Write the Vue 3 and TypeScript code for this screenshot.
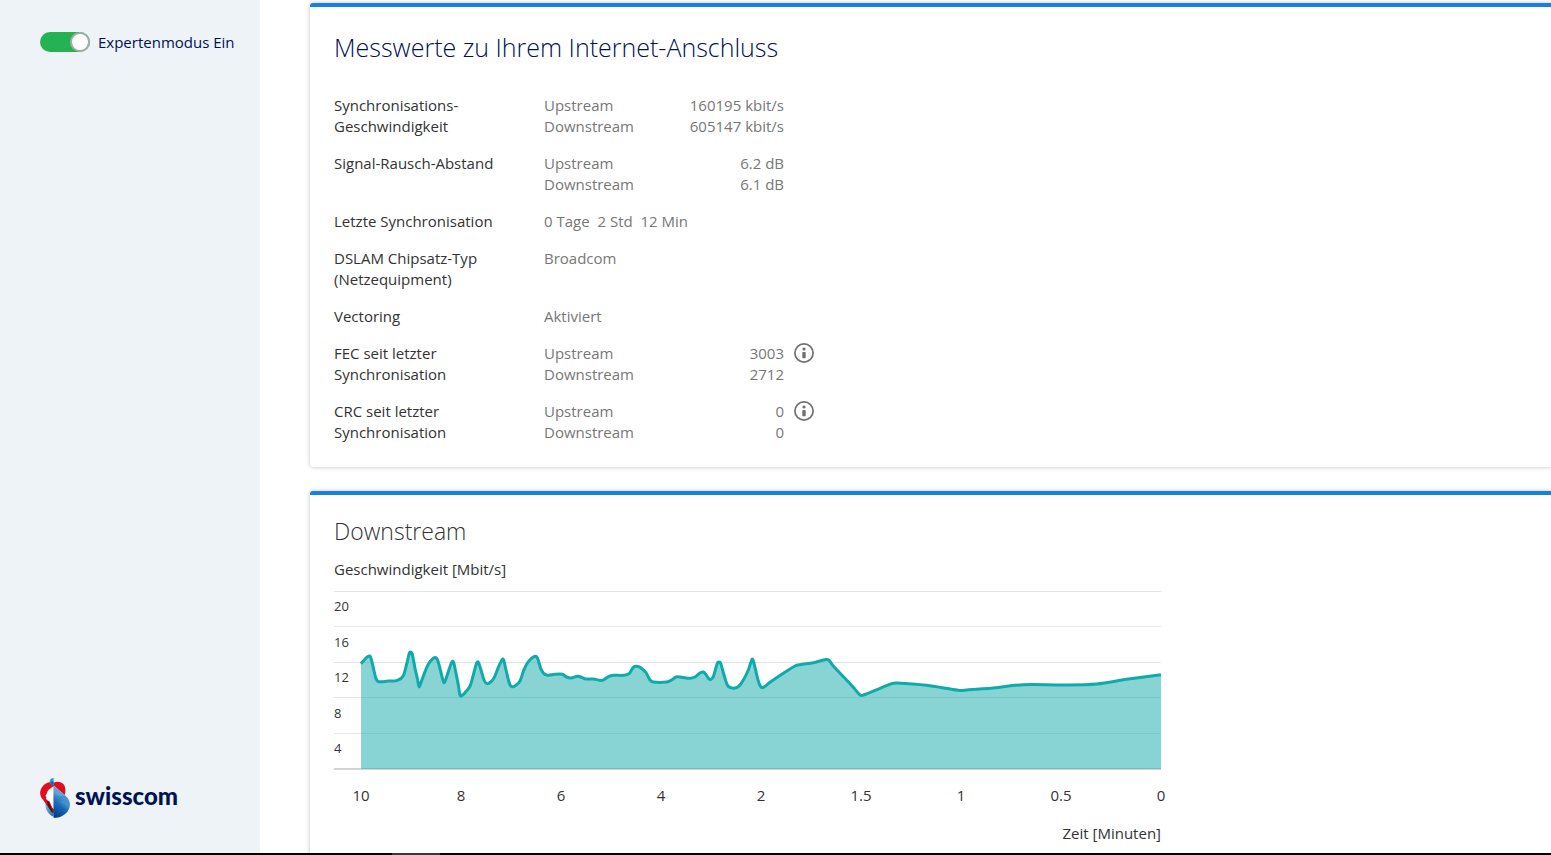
<script setup lang="ts">
import { ref } from 'vue'

interface Measurement {
  label: string[]
  names: string[]
  values: string[]
  info?: boolean
}

const expert = ref(true)

const measurements: Measurement[] = [
  { label: ['Synchronisations-', 'Geschwindigkeit'], names: ['Upstream', 'Downstream'], values: ['160195 kbit/s', '605147 kbit/s'] },
  { label: ['Signal-Rausch-Abstand'], names: ['Upstream', 'Downstream'], values: ['6.2 dB', '6.1 dB'] },
  { label: ['Letzte Synchronisation'], names: ['0 Tage\u00a0 2 Std\u00a0 12 Min'], values: [] },
  { label: ['DSLAM Chipsatz-Typ', '(Netzequipment)'], names: ['Broadcom'], values: [] },
  { label: ['Vectoring'], names: ['Aktiviert'], values: [] },
  { label: ['FEC seit letzter', 'Synchronisation'], names: ['Upstream', 'Downstream'], values: ['3003', '2712'], info: true },
  { label: ['CRC seit letzter', 'Synchronisation'], names: ['Upstream', 'Downstream'], values: ['0', '0'], info: true },
]

const yTicks = [20, 16, 12, 8, 4].map((value, i) => ({ value, line: [11, 46, 82, 117, 153][i], text: [31, 67, 102, 138, 173][i] }))
const xTicks = ['10', '8', '6', '4', '2', '1.5', '1', '0.5', '0'].map((value, i) => ({ value, x: 27 + i * 100 }))

// Samples as [time, depth below the chart top], three steps per chart unit
const samples: [number, number][] = [
  [0, 251], [17, 232], [26, 228], [31, 238], [38, 268], [45, 296], [53, 305], [82, 303], [109, 301], [127, 287],
  [137, 252], [145, 220], [149, 216], [154, 223], [162, 265], [170, 300], [174, 320], [179, 310], [189, 283],
  [202, 253], [217, 235], [227, 235], [233, 250], [243, 290], [249, 308], [255, 296], [267, 260], [273, 245],
  [278, 247], [283, 270], [292, 315], [297, 345], [304, 346], [317, 332], [328, 316], [337, 285], [347, 249],
  [352, 247], [359, 267], [369, 300], [378, 311], [389, 306], [400, 292], [412, 262], [424, 238], [428, 240],
  [435, 270], [445, 310], [452, 320], [463, 317], [477, 303], [489, 269], [502, 245], [519, 230], [529, 233],
  [539, 265], [549, 281], [560, 286], [582, 283], [604, 283], [617, 291], [630, 294], [650, 289], [662, 292],
  [674, 297], [697, 297], [717, 301], [727, 300], [742, 290], [757, 286], [787, 286], [804, 281], [817, 262],
  [827, 259], [839, 263], [855, 278], [867, 300], [877, 306], [917, 306], [932, 300], [945, 291], [962, 292],
  [987, 295], [1002, 291], [1017, 279], [1027, 276], [1035, 284], [1043, 296], [1050, 298], [1057, 290],
  [1069, 250], [1074, 246], [1079, 250], [1089, 285], [1099, 315], [1109, 323], [1122, 324], [1133, 319],
  [1147, 300], [1162, 270], [1172, 240], [1175, 238], [1179, 250], [1191, 300], [1199, 320], [1207, 322],
  [1227, 307], [1267, 280], [1302, 258], [1317, 254], [1357, 248], [1392, 239], [1403, 240], [1417, 258],
  [1479, 324], [1497, 345], [1507, 345], [1557, 325], [1592, 311], [1607, 309], [1697, 316], [1792, 331],
  [1817, 330], [1897, 324], [1987, 314], [2107, 315], [2207, 312], [2297, 298], [2400, 284],
]

// Cubic curve through all points, each tangent taken from the two neighbours
function curve(points: number[][]): string {
  const last = points.length - 1
  const tangents = points.map((_, i) => {
    const a = points[Math.max(i - 1, 0)]
    const b = points[Math.min(i + 1, last)]
    return (b[1] - a[1]) / (b[0] - a[0])
  })
  let d = `M${points[0][0]} ${points[0][1]}`
  for (let i = 0; i < last; i++) {
    const [x0, y0] = points[i]
    const [x1, y1] = points[i + 1]
    const h = (x1 - x0) / 3
    d += `C${x0 + h} ${y0 + tangents[i] * h} ${x1 - h} ${y1 - tangents[i + 1] * h} ${x1} ${y1}`
  }
  return d
}

const linePath = curve(samples.map(([x, y]) => [27 + x / 3, y / 3]))
const areaPath = `${linePath}V189H27Z`
</script>

<template>
  <div class="page">
    <div class="view">
      <aside class="sidebar">
        <label class="switch">
          <input v-model="expert" type="checkbox" role="switch" />
          <span>Expertenmodus {{ expert ? 'Ein' : 'Aus' }}</span>
        </label>
        <div class="brand">
          <svg class="brand-mark" viewBox="0 0 90 120" aria-hidden="true">
            <defs>
              <linearGradient id="wing" x1="0.7" y1="0" x2="0.3" y2="1">
                <stop offset="0" stop-color="#2f86cc" />
                <stop offset="0.35" stop-color="#5fa9df" />
                <stop offset="0.65" stop-color="#1768b4" />
                <stop offset="1" stop-color="#0a3f88" />
              </linearGradient>
              <linearGradient id="cheek" x1="0" y1="0" x2="1" y2="1">
                <stop offset="0" stop-color="#86c5ea" />
                <stop offset="1" stop-color="#1c66b0" />
              </linearGradient>
              <linearGradient id="heart" x1="0" y1="0" x2="0.4" y2="1">
                <stop offset="0" stop-color="#e5101f" />
                <stop offset="0.6" stop-color="#dd0c20" />
                <stop offset="1" stop-color="#8d0714" />
              </linearGradient>
            </defs>
            <path d="M17 72C13 88 22 110 41 116L41 92Z" fill="url(#cheek)" />
            <path d="M40 16C31 10 20 11 9 24C-2 36-3 53 9 65L30 95L41 105V14C51 9 68 11 74 24C77 33 77 42 74 51L40 22Z" fill="url(#heart)" />
            <path d="M41 25C33 30 25 35 22 41C22 46 16 51 17 55C19 57 20 59 18 62C20 67 27 67 29 71C32 78 35 88 41 94Z" fill="#fff" />
            <path d="M20 68C27 69 29 75 31 83C33 91 37 99 41 106C31 100 24 86 20 68Z" fill="#5b0712" />
            <path d="M41 24L76 53C87 62 92 76 89 87C85 106 64 120 41 120Z" fill="url(#wing)" />
            <path d="M41 53L76 53C87 62 91 73 89 83C75 67 59 63 41 88Z" fill="#1b6fbb" opacity="0.35" />
            <path d="M29 13C28 4 33 0 41 0V25C35 22 31 18 29 13Z" fill="#3b9ad4" />
            <path d="M31 12C34 9 38 9 41 12V25C36 22 33 17 31 12Z" fill="#1467b1" />
          </svg>
          <span class="brand-name">swisscom</span>
        </div>
      </aside>

      <main class="content">
        <section class="card">
          <h1>Messwerte zu Ihrem Internet-Anschluss</h1>
          <table class="values">
            <tbody>
              <tr v-for="row in measurements" :key="row.label[0]">
                <th scope="row"><div v-for="line in row.label" :key="line">{{ line }}</div></th>
                <td class="name" :colspan="row.values.length ? 1 : 2">
                  <div v-for="line in row.names" :key="line">{{ line }}</div>
                </td>
                <td v-if="row.values.length" class="number">
                  <div v-for="(line, i) in row.values" :key="i">{{ line }}</div>
                </td>
                <td class="help">
                  <button v-if="row.info" type="button" :aria-label="'Information zu ' + row.label.join(' ')">
                    <svg viewBox="0 0 20 20" aria-hidden="true">
                      <circle cx="10" cy="10" r="9.1" fill="none" stroke="#707070" stroke-width="1.7" />
                      <circle cx="10" cy="6" r="1.6" fill="#707070" />
                      <rect x="8.3" y="9" width="3.4" height="6.3" rx="0.7" fill="#707070" />
                    </svg>
                  </button>
                </td>
              </tr>
            </tbody>
          </table>
        </section>

        <section class="card">
          <h2>Downstream</h2>
          <p class="axis-title">Geschwindigkeit [Mbit/s]</p>
          <div class="chart">
            <svg class="plot" viewBox="0 0 827 231" role="img" aria-label="Downstream-Geschwindigkeit">
              <g class="grid">
                <rect v-for="t in yTicks" :key="t.value" x="0" :y="t.line" width="827" height="1" />
              </g>
              <rect class="base" x="0" y="188" width="827" height="2" />
              <path class="area" :d="areaPath" />
              <path class="line" :d="linePath" />
              <text v-for="t in yTicks" :key="t.value" class="y-label" x="0" :y="t.text">{{ t.value }}</text>
              <text v-for="t in xTicks" :key="t.value" class="x-label" :x="t.x" y="221">{{ t.value }}</text>
            </svg>
            <p class="time">Zeit [Minuten]</p>
          </div>
        </section>
      </main>
    </div>
    <div class="taskbar"><span></span></div>
  </div>
</template>

<style>
body {
  margin: 0;
  background: #fff;
}
</style>

<style scoped>
.page {
  display: flex;
  flex-direction: column;
  height: 100vh;
  overflow: hidden;
  font-family: "Open Sans", "Noto Sans", sans-serif;
  font-size: 15px;
  line-height: 21px;
  color: #333;
}
.view {
  display: flex;
  flex: 1;
  min-height: 0;
}
.sidebar {
  box-sizing: border-box;
  display: flex;
  flex-direction: column;
  justify-content: space-between;
  flex: 0 0 260px;
  padding: 32px 0 35px 40px;
  background: #edf3f6;
}
.switch {
  display: flex;
  align-items: center;
  gap: 8px;
  height: 20px;
  color: #001155;
  white-space: nowrap;
}
.switch input {
  appearance: none;
  display: flex;
  width: 50px;
  height: 20px;
  margin: 0;
  border-radius: 10px;
  background: #a8a8a8;
}
.switch input::before {
  content: "";
  box-sizing: border-box;
  width: 20px;
  height: 20px;
  border: 2px solid #aaa;
  border-radius: 50%;
  background: #fff;
}
.switch input:checked {
  justify-content: flex-end;
  background: #25b252;
}
.brand {
  display: flex;
  align-items: center;
  gap: 5px;
}
.brand-mark {
  width: 30px;
  height: 40px;
}
.brand-name {
  padding-bottom: 4px;
  font-family: Lato, "Open Sans", sans-serif;
  font-size: 24px;
  font-weight: 900;
  line-height: 28px;
  color: #001155;
}
.content {
  display: flex;
  flex-direction: column;
  flex: 1;
  gap: 24px;
  min-width: 0;
  padding: 3px 0 0 50px;
  overflow: hidden;
}
.card {
  flex: none;
  padding: 24px;
  border-top: 4px solid #1781e3;
  border-radius: 3px 0 0 3px;
  box-shadow: 0 0 4px rgba(0, 0, 0, 0.25);
  background: #fff;
}
h1,
h2,
p {
  margin: 0;
}
h1 {
  margin-bottom: 32px;
  font-size: 25px;
  font-weight: 300;
  line-height: 32px;
  color: #001155;
}
h2 {
  margin-bottom: 16px;
  font-size: 23px;
  font-weight: 300;
  line-height: 24px;
}
.values {
  border-spacing: 0;
  color: #777;
}
.values th,
.values td {
  padding: 0 0 16px;
  text-align: left;
  vertical-align: top;
}
.values tr:last-child > * {
  padding-bottom: 0;
}
.values th {
  width: 210px;
  font-weight: 400;
  color: #333;
}
.values .name {
  width: 120px;
}
.values .number {
  width: 120px;
  text-align: right;
}
.values .help {
  padding-left: 10px;
}
.help button {
  display: block;
  width: 20px;
  height: 20px;
  padding: 0;
  border: 0;
  background: none;
}
.help svg {
  display: block;
}
.chart {
  max-width: 827px;
}
.plot {
  display: block;
  width: 100%;
  overflow: visible;
}
.grid {
  fill: #e4e4e4;
}
.base {
  fill: #d4d4d4;
}
.area {
  fill: #11aaaa;
  fill-opacity: 0.5;
}
.line {
  fill: none;
  stroke: #11aaaa;
  stroke-width: 3;
  stroke-linejoin: round;
}
.plot text {
  fill: #333;
}
.y-label {
  font-size: 13px;
}
.x-label {
  text-anchor: middle;
}
.time {
  margin-top: 12px;
  text-align: right;
}
.taskbar {
  flex: 0 0 2px;
  background: #000;
}
.taskbar span {
  display: block;
  width: 48px;
  height: 2px;
  margin-left: 392px;
  background: #3b3b3b;
}
</style>
